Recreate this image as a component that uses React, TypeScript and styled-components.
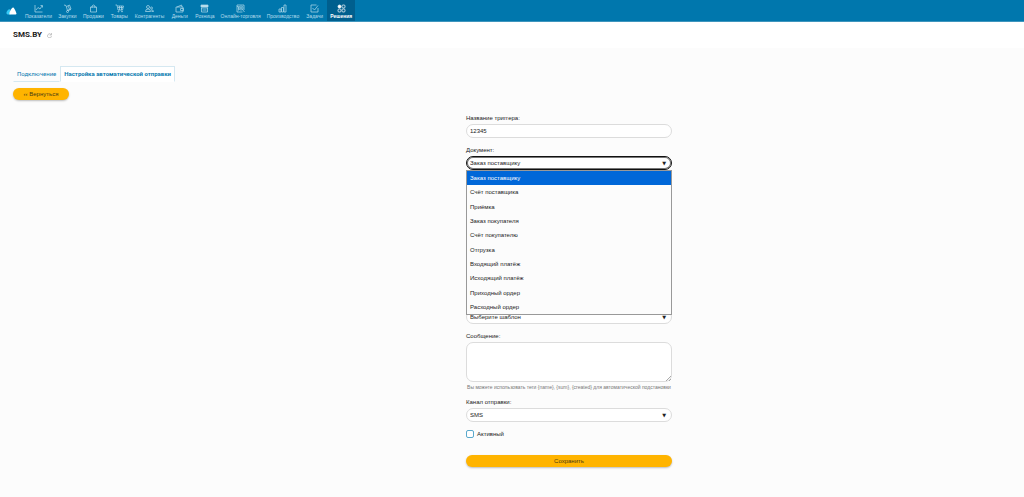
import React from 'react';
import styled, { createGlobalStyle, css } from 'styled-components';

const GlobalStyle = createGlobalStyle`
  *, *::before, *::after { box-sizing: border-box; }
  body {
    margin: 0;
    background: #fcfcfc;
    color: #222;
    font-family: "Liberation Sans", Arial, sans-serif;
    font-size: 6px;
    line-height: 8px;
  }
  button, input, select, textarea { font: inherit; color: inherit; }
`;

const TopBar = styled.header`
  display: flex;
  height: 22px;
  padding-left: 6px;
  background: #0077ad;
  border-bottom: 1px solid #3f95bd;
`;

const Brand = styled.a`
  display: flex;
  align-items: center;
  width: 16px;
  svg { width: 11px; height: 8px; display: block; }
`;

const Nav = styled.nav`
  display: flex;
`;

const NavItem = styled.a<{ $active?: boolean }>`
  display: flex;
  flex-direction: column;
  align-items: center;
  min-width: 25px;
  padding: 4px 3px 0;
  color: ${p => (p.$active ? '#fff' : '#b5dcec')};
  background: ${p => (p.$active ? '#005f8e' : 'transparent')};
  font-size: 5px;
  font-weight: ${p => (p.$active ? 700 : 400)};
  line-height: 6px;
  text-decoration: none;
  white-space: nowrap;
  svg { width: 9px; height: 9px; display: block; }
`;

const TitleBar = styled.div`
  display: flex;
  align-items: center;
  gap: 5px;
  height: 26px;
  padding: 0 13px;
  background: #fff;
`;

const Title = styled.h1`
  margin: 0;
  font-family: Roboto, Arial, sans-serif;
  font-size: 8px;
  line-height: 10px;
  font-weight: 700;
`;

const Refresh = styled.button`
  width: 5px;
  height: 5px;
  padding: 0;
  border: 0;
  background: none;
  svg { display: block; width: 5px; height: 5px; }
`;

const Tabs = styled.div`
  display: flex;
  margin: 18px 13px 0;
  font-family: Roboto, Arial, sans-serif;
`;

const Tab = styled.button<{ $active?: boolean }>`
  height: 16px;
  padding: 0 3px;
  border: 1px solid transparent;
  border-bottom-color: #d5e8f1;
  background: none;
  color: #0b7bb0;
  white-space: nowrap;
  ${p => p.$active && css`
    border-color: #d5e8f1;
    border-bottom-color: transparent;
    background: #fff;
    font-weight: 700;
  `}
`;

const pill = css`
  border: 0;
  border-radius: 6px;
  background: #ffb400;
  color: #4a3c14;
  box-shadow: 0 1px 2px rgba(0, 0, 0, 0.25);
`;

const BackButton = styled.button`
  ${pill}
  display: block;
  width: 56px;
  height: 12px;
  margin: 6px 13px 0;
  padding: 0;
`;

const FormGrid = styled.main`
  display: grid;
  grid-template-columns: 466fr 206fr 352fr;
  padding: 14px 0 24px;
`;

const Form = styled.form`
  grid-column: 2;
  display: flex;
  flex-direction: column;
`;

const Field = styled.div<{ $gap?: number }>`
  position: relative;
  display: flex;
  flex-direction: column;
  margin-bottom: ${p => p.$gap ?? 8}px;
`;

const Label = styled.label`
  margin-bottom: 2px;
`;

const control = css`
  width: 100%;
  height: 14px;
  padding: 0 3px;
  border: 1px solid #dcdcdc;
  border-radius: 7px;
  background: #fff;
  outline: 0;
`;

const TextInput = styled.input`
  ${control}
`;

const SelectBox = styled.div`
  position: relative;
  &::after {
    content: "▼";
    position: absolute;
    top: 3px;
    right: 6px;
    font-family: "DejaVu Sans", sans-serif;
    font-size: 5px;
    pointer-events: none;
  }
`;

const Select = styled.select<{ $focused?: boolean }>`
  ${control}
  display: block;
  appearance: none;
  ${p => p.$focused && css`
    border-color: #111;
    box-shadow: inset 0 0 0 1px #777;
  `}
`;

const Options = styled.ul`
  position: absolute;
  z-index: 1;
  top: 100%;
  left: 0;
  right: 0;
  display: grid;
  grid-auto-rows: 1fr;
  height: 145px;
  margin: 0;
  padding: 0;
  list-style: none;
  border: 1px solid #999;
  background: #fcfcfc;
`;

const Option = styled.li<{ $selected?: boolean }>`
  display: flex;
  align-items: center;
  padding: 0 3px;
  ${p => p.$selected && css`
    background: #0067d8;
    color: #fff;
  `}
`;

const TextArea = styled.textarea`
  ${control}
  display: block;
  height: 40px;
  resize: none;
`;

const MessageBox = styled.div`
  position: relative;
  svg {
    position: absolute;
    right: 1px;
    bottom: 1px;
    width: 5px;
    height: 5px;
  }
`;

const Hint = styled.small`
  margin-top: 2px;
  color: #777;
  font-size: 5px;
  line-height: 6px;
  text-align: center;
  white-space: nowrap;
`;

const CheckRow = styled.label`
  display: flex;
  align-items: center;
  gap: 3px;
`;

const Check = styled.input`
  appearance: none;
  width: 8px;
  height: 8px;
  margin: 0;
  border: 1px solid #5aa9cc;
  border-radius: 2px;
  background: #fff;
`;

const SaveButton = styled.button`
  ${pill}
  height: 12px;
  margin-top: 17px;
  padding: 0;
`;

const Icon = ({ children }: { children: React.ReactNode }) => (
  <svg viewBox="0 0 18 18" fill="none" stroke="currentColor" strokeWidth="1.4" aria-hidden="true">{children}</svg>
);

const navItems = [
  { label: 'Показатели', icon: <><path d="M2 2v14h15M4 12l4-5 4 3 4-6M13 3h4v4" /></> },
  { label: 'Закупки', icon: <><path d="M2 2l4 1 3 10M7 5l6-3 3 8-7 3M10 4l3 6M9 13l7-2" /><circle cx="9" cy="15" r="2" /></> },
  { label: 'Продажи', icon: <><path d="M3 6h12v10H3zM6 8V4q3-4 6 0v4" /></> },
  { label: 'Товары', icon: <><path d="M1 2h3l2 10h9l2-8H5M6 7h10M9 4v8M13 4v8" /><circle cx="7" cy="15" r="1" /><circle cx="14" cy="15" r="1" /></> },
  { label: 'Контрагенты', icon: <><circle cx="6" cy="6" r="3" /><circle cx="13" cy="8" r="2" /><path d="M1 15q0-5 5-5t5 5zM12 12q5-1 5 3h-4" /></> },
  { label: 'Деньги', icon: <><path d="M2 6h14v10H2zM4 6l9-4 1 4M11 9h6v4h-6z" /></> },
  { label: 'Розница', icon: <><path d="M2 2h14v4H2z" fill="currentColor" /><path d="M3 8v8h12V8M2 8h14M5 12h8" /></> },
  { label: 'Онлайн-торговля', icon: <><path d="M16 12V2H2v14h11M2 5h3M5 5v8" /><circle cx="10" cy="8" r="4" /><path d="M13 11l4 5M8 8h4M10 6v4" /></> },
  { label: 'Производство', icon: <><path d="M2 10h4v6H2zM7 7h4v9H7zM12 2h4v14h-4z" /></> },
  { label: 'Задачи', icon: <><path d="M16 8v8H2V2h11M5 8l4 4 7-9" /></> },
  { label: 'Решения', icon: <><circle cx="5" cy="5" r="3" fill="currentColor" /><rect x="10" y="2" width="6" height="6" rx="2" /><rect x="2" y="10" width="6" height="6" rx="2" /><rect x="10" y="10" width="6" height="6" rx="2" /></> },
];

const documents = [
  'Заказ поставщику', 'Счёт поставщика', 'Приёмка', 'Заказ покупателя', 'Счёт покупателю',
  'Отгрузка', 'Входящий платёж', 'Исходящий платёж', 'Приходный ордер', 'Расходный ордер',
];

export default function App() {
  return (
    <>
      <GlobalStyle />
      <TopBar>
        <Brand href="#" aria-label="Главная">
          <svg viewBox="0 0 22 16" aria-hidden="true">
            <path d="M1 13Q0 10 3 7q3-4 6-2v10H4q-2 0-3-2z" fill="#35c8f5" />
            <path d="M7 15q-1-4 3-10 4-7 7-1 3 5 4 9 0 2-2 2z" fill="#fff" />
          </svg>
        </Brand>
        <Nav>
          {navItems.map(({ label, icon }) => (
            <NavItem href="#" key={label} $active={label === 'Решения'}>
              <Icon>{icon}</Icon>
              {label}
            </NavItem>
          ))}
        </Nav>
      </TopBar>
      <TitleBar>
        <Title>SMS.BY</Title>
        <Refresh type="button" aria-label="Обновить">
          <svg viewBox="0 0 10 10" fill="none" stroke="#b5b5b5" strokeWidth="1.5" aria-hidden="true">
            <path d="M8 3a4 4 0 1 0 1 3M9 0v4H5" />
          </svg>
        </Refresh>
      </TitleBar>
      <Tabs role="tablist">
        <Tab type="button" role="tab">Подключение</Tab>
        <Tab type="button" role="tab" aria-selected $active>Настройка автоматической отправки</Tab>
      </Tabs>
      <BackButton type="button">‹‹ Вернуться</BackButton>
      <FormGrid>
        <Form>
          <Field>
            <Label htmlFor="name">Название триггера:</Label>
            <TextInput id="name" defaultValue="12345" />
          </Field>
          <Field $gap={140}>
            <Label htmlFor="document">Документ:</Label>
            <SelectBox>
              <Select id="document" $focused>
                {documents.map(d => <option key={d}>{d}</option>)}
              </Select>
            </SelectBox>
            <Options role="listbox" aria-label="Документ">
              {documents.map((d, i) => (
                <Option key={d} role="option" aria-selected={i === 0} $selected={i === 0}>{d}</Option>
              ))}
            </Options>
          </Field>
          <Field>
            <SelectBox>
              <Select aria-label="Шаблон"><option>Выберите шаблон</option></Select>
            </SelectBox>
          </Field>
          <Field>
            <Label htmlFor="message">Сообщение:</Label>
            <MessageBox>
              <TextArea id="message" />
              <svg viewBox="0 0 5 5" stroke="#888" strokeWidth="0.7" aria-hidden="true">
                <path d="M0 5L5 0M3 5L5 3" />
              </svg>
            </MessageBox>
            <Hint>Вы можете использовать теги {'{name}, {sum}, {created}'} для автоматической подстановки</Hint>
          </Field>
          <Field>
            <Label htmlFor="channel">Канал отправки:</Label>
            <SelectBox>
              <Select id="channel"><option>SMS</option></Select>
            </SelectBox>
          </Field>
          <CheckRow>
            <Check type="checkbox" />
            Активный
          </CheckRow>
          <SaveButton type="submit">Сохранить</SaveButton>
        </Form>
      </FormGrid>
    </>
  );
}
